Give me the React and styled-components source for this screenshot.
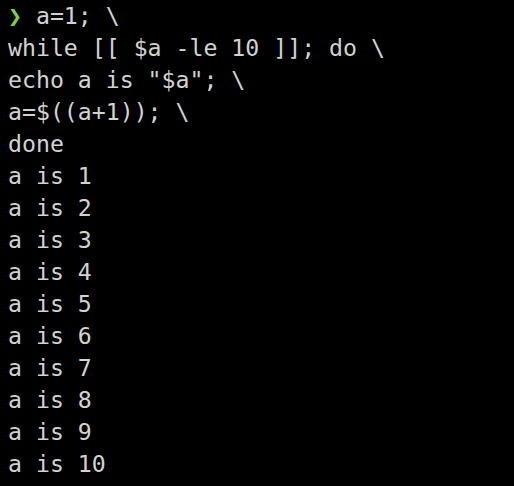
import React from 'react';
import styled, { createGlobalStyle } from 'styled-components';

const GlobalStyle = createGlobalStyle`
  html, body {
    margin: 0;
    padding: 0;
    background: #000;
  }
`;

const Terminal = styled.div`
  width: 514px;
  height: 486px;
  box-sizing: border-box;
  padding: 0 8px;
  background: #000;
  color: #d2d2d2;
  font-family: 'DejaVu Sans Mono', 'Liberation Mono', monospace;
  font-size: 23.2px;
  line-height: 32px;
  overflow: hidden;
`;

const Line = styled.div`
  white-space: pre;
`;

const Prompt = styled.span`
  color: #7fd33c;
  font-weight: bold;
`;

const command = [
  'while [[ $a -le 10 ]]; do \\',
  'echo a is "$a"; \\',
  'a=$((a+1)); \\',
  'done',
];

const output = Array.from({ length: 10 }, (_, i) => `a is ${i + 1}`);

const App = () => (
  <>
    <GlobalStyle />
    <Terminal>
      <Line>
        <Prompt>❯</Prompt> a=1; \
      </Line>
      {command.map((l) => (
        <Line key={l}>{l}</Line>
      ))}
      {output.map((l) => (
        <Line key={l}>{l}</Line>
      ))}
    </Terminal>
  </>
);

export default App;
